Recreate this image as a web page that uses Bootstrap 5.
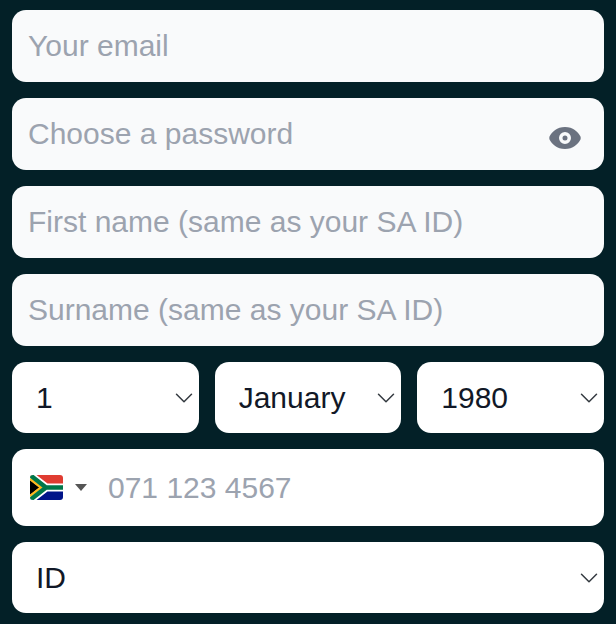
<!DOCTYPE html>
<html lang="en">
<head>
<meta charset="utf-8">
<title>Sign up</title>
<link href="https://cdn.jsdelivr.net/npm/bootstrap@5.3.0/dist/css/bootstrap.min.css" rel="stylesheet">
<style>
html, body { height: 624px; overflow: hidden; }
body { background: #032027; font-family: "Liberation Sans", Arial, sans-serif; }
.signup-form { padding: 10px 12px 0; }
.signup-form .form-control, .signup-form .form-select {
  font-size: 30px; font-family: "Liberation Sans", Arial, sans-serif; color: #111827; border: 0; box-shadow: none;
}
.signup-form .form-control::placeholder { color: #9ca3af; opacity: 1; }
.text-field { height: 72px; border-radius: 14px; background: #f9fafb; padding: 0 16px; }
.pick-field {
  height: 71px; border-radius: 14px; background-color: #fff; padding: 0 40px 0 24px;
  background-size: 20px 20px; background-position: right 5px center;
  background-image: url("data:image/svg+xml,%3csvg xmlns='http://www.w3.org/2000/svg' viewBox='0 0 16 16'%3e%3cpath fill='none' stroke='%23343a40' stroke-linecap='round' stroke-linejoin='round' stroke-width='1.2' d='m2 5 6 6 6-6'/%3e%3c/svg%3e");
}
.eye-holder { right: 24px; top: 29px; width: 31px; height: 22px; line-height: 0; }
.phone-box { height: 77px; border-radius: 14px; padding-left: 18px; }
.flag-svg { width: 33px; height: 25px; border-radius: 3px; flex: none; }
.caret-down { width: 0; height: 0; border-left: 6px solid transparent; border-right: 6px solid transparent; border-top: 7px solid #555; margin: 0 21px 0 12px; flex: none; }
.phone-box .form-control { padding: 0; height: 100%; background: transparent; }
</style>
</head>
<body>
<form class="signup-form d-flex flex-column gap-3">
  <input class="form-control text-field" type="email" placeholder="Your email">
  <div class="position-relative">
    <input class="form-control text-field" type="password" placeholder="Choose a password">
    <span class="eye-holder position-absolute">
      <svg width="32" height="22" viewBox="0 0 32 22" aria-hidden="true"><path fill="#6b7280" fill-rule="evenodd" d="M16 0C24 0 29 5 31.500 9.500Q32 11 31.500 12.500C29 17 24 22 16 22S3 17 .5 12.500Q0 11 .5 9.500C3 5 8 0 16 0ZM16 5a6 6 0 1 0 0 12 6 6 0 0 0 0-12ZM16 8.500a2.500 2.500 0 1 1 0 5 2.500 2.500 0 0 1 0-5Z"/></svg>
    </span>
  </div>
  <input class="form-control text-field" type="text" placeholder="First name (same as your SA ID)">
  <input class="form-control text-field" type="text" placeholder="Surname (same as your SA ID)">
  <div class="row g-3">
    <div class="col-4"><select class="form-select pick-field"><option>1</option><option>2</option></select></div>
    <div class="col-4"><select class="form-select pick-field"><option>January</option><option>February</option></select></div>
    <div class="col-4"><select class="form-select pick-field"><option>1980</option><option>1981</option></select></div>
  </div>
  <div class="phone-box d-flex align-items-center bg-white">
    <svg class="flag-svg" viewBox="0 0 33 25" aria-hidden="true">
      <rect width="33" height="12.500" fill="#e03c31"/>
      <rect y="12.500" width="33" height="12.500" fill="#001489"/>
      <path d="M0 0 16 12.500 0 25Z" fill="#000"/>
      <path d="M0 0 16 12.500H33M0 25 16 12.500" fill="none" stroke="#fff" stroke-width="8"/>
      <path d="M0 4 11 12.500 0 21" fill="none" stroke="#ffb81c" stroke-width="2.500"/>
      <path d="M0 0 16 12.500H33M0 25 16 12.500" fill="none" stroke="#007749" stroke-width="4.500"/>
    </svg>
    <span class="caret-down"></span>
    <input class="form-control" type="tel" placeholder="071 123 4567">
  </div>
  <select class="form-select pick-field"><option>ID</option><option>Passport</option></select>
</form>
<script src="https://cdn.jsdelivr.net/npm/bootstrap@5.3.0/dist/js/bootstrap.bundle.min.js"></script>
</body>
</html>
